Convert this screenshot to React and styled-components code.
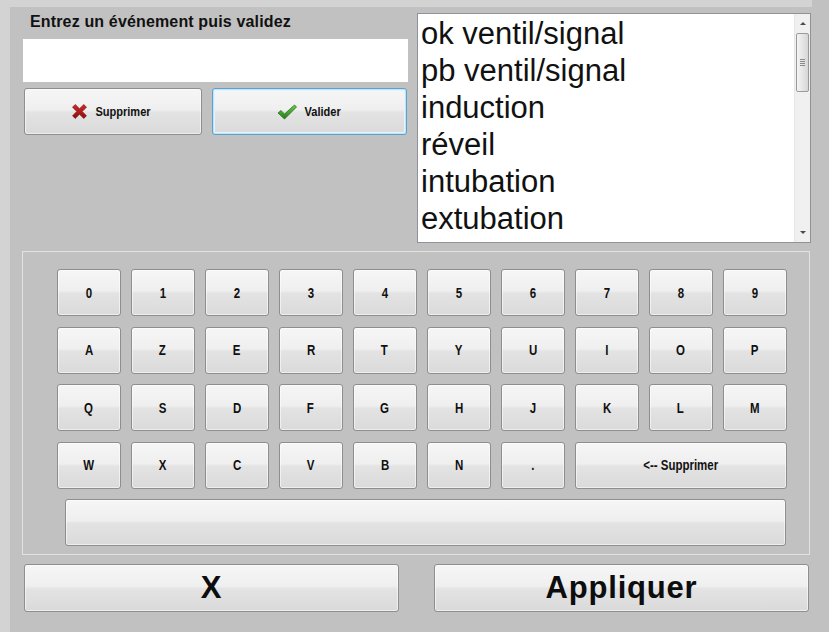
import React from "react";
import styled, { createGlobalStyle, css } from "styled-components";

const GlobalStyle = createGlobalStyle`
  html, body {
    margin: 0;
    padding: 0;
    background: #c1c1c1;
  }
  body {
    font-family: "Liberation Sans", Arial, sans-serif;
  }
  * {
    box-sizing: border-box;
  }
`;

const buttonFace = css`
  border: 1px solid #8e8e8e;
  border-radius: 3px;
  background: linear-gradient(
    to bottom,
    #f6f6f6 0%,
    #efefef 46%,
    #e3e3e3 52%,
    #dadada 100%
  );
  box-shadow: inset 0 0 0 1px rgba(255, 255, 255, 0.55);
  color: #111;
  padding: 0;
  cursor: pointer;
`;

const Frame = styled.div`
  width: 812px;
  height: 632px;
  border-left: 10px solid #d3d3d3;
  border-top: 7px solid #d3d3d3;
  background: #c1c1c1;
  padding: 6px 0 0 12px;
  display: flex;
  flex-direction: column;
`;

const TopRow = styled.div`
  display: flex;
  gap: 9px;
`;

const EntryColumn = styled.div`
  width: 386px;
  display: flex;
  flex-direction: column;
`;

const Prompt = styled.label`
  font-weight: bold;
  font-size: 16px;
  line-height: 18px;
  letter-spacing: 0.15px;
  color: #111;
  padding-left: 8px;
`;

const EventInput = styled.input`
  margin: 8px 0 0 1px;
  height: 43px;
  width: 385px;
  border: none;
  background: #fff;
  font: 18px "Liberation Sans", Arial, sans-serif;
  padding: 0 6px;
  outline: none;
`;

const ActionRow = styled.div`
  display: flex;
  gap: 10px;
  margin: 6px 0 0 2px;
`;

const ActionButton = styled.button`
  ${buttonFace};
  width: ${(p) => p.$width}px;
  height: 47px;
  display: flex;
  align-items: center;
  justify-content: center;
  gap: 6px;
  font: bold 12px "Liberation Sans", Arial, sans-serif;
  ${(p) =>
    p.$focused &&
    css`
      border-color: #5aa3d0;
      box-shadow: inset 0 0 0 1px #bfe4f8, inset 0 0 0 2px #e4f4fc;
    `}
`;

/* narrow bold face for the small captions */
const Narrow = styled.span`
  display: inline-block;
  transform: scaleX(${(p) => p.$scale || 0.82});
  white-space: nowrap;
`;

const EventList = styled.div`
  width: 394px;
  height: 230px;
  border: 1px solid #8f9399;
  background: #fff;
  display: flex;
`;

const Items = styled.ul`
  flex: 1;
  list-style: none;
  margin: 0;
  padding: 1px 0 0 3px;
  overflow: hidden;
`;

const Item = styled.li`
  font-size: 31px;
  line-height: 37px;
  color: #111;
  white-space: nowrap;
`;

const ScrollTrack = styled.div`
  width: 16px;
  background: #f0f0f0;
  border-left: 1px solid #e6e6e6;
  display: flex;
  flex-direction: column;
  align-items: center;
`;

const ArrowCell = styled.div`
  height: 19px;
  width: 100%;
  display: flex;
  align-items: center;
  justify-content: center;
  margin-top: ${(p) => (p.$down ? "auto" : "0")};
`;

const Arrow = styled.span`
  width: 0;
  height: 0;
  border-left: 3px solid transparent;
  border-right: 3px solid transparent;
  ${(p) =>
    p.$down
      ? css`
          border-top: 3px solid #4a4a4a;
        `
      : css`
          border-bottom: 3px solid #4a4a4a;
        `}
`;

const Thumb = styled.div`
  width: 13px;
  height: 59px;
  border: 1px solid #9a9a9a;
  border-radius: 2px;
  background: linear-gradient(to right, #f4f4f4, #e4e4e4 55%, #d6d6d6);
  display: flex;
  flex-direction: column;
  align-items: center;
  justify-content: center;
  gap: 1px;
`;

const Grip = styled.span`
  width: 5px;
  height: 1px;
  background: #8a8a8a;
`;

const KeyPanel = styled.div`
  width: 788px;
  height: 304px;
  margin-top: 8px;
  border: 1px solid #e2e2e2;
  padding: 17px 0 0 34px;
`;

const KeyGrid = styled.div`
  display: grid;
  grid-template-columns: repeat(10, 63.5px);
  grid-auto-rows: 47px;
  column-gap: 10.5px;
  row-gap: 10.5px;
`;

const Key = styled.button`
  ${buttonFace};
  grid-column: span ${(p) => p.$span || 1};
  font: bold 14px "Liberation Sans", Arial, sans-serif;
`;

const SpaceBar = styled.button`
  ${buttonFace};
  display: block;
  width: 721px;
  height: 47px;
  margin: 10.5px 0 0 8px;
`;

const BottomRow = styled.div`
  display: flex;
  gap: 35px;
  margin: 9px 0 0 2px;
`;

const BigButton = styled.button`
  ${buttonFace};
  width: 375px;
  height: 48px;
  font: bold 31px "Liberation Sans", Arial, sans-serif;
  letter-spacing: 0.8px;
  color: #0d0d0d;
`;

function CrossIcon() {
  return (
    <svg width="15" height="15" viewBox="0 0 14 14" aria-hidden="true">
      <defs>
        <linearGradient id="crossRed" x1="0" y1="0" x2="0" y2="1">
          <stop offset="0" stopColor="#d8282b" />
          <stop offset="1" stopColor="#8e0d10" />
        </linearGradient>
      </defs>
      <path
        d="M0.5 3 L3 0.5 L7 4.5 L11 0.5 L13.5 3 L9.5 7 L13.5 11 L11 13.5 L7 9.5 L3 13.5 L0.5 11 L4.5 7 Z"
        fill="url(#crossRed)"
        stroke="#6e0a0c"
        strokeWidth="0.6"
        strokeLinejoin="round"
      />
    </svg>
  );
}

function CheckIcon() {
  return (
    <svg width="20" height="16" viewBox="0 0 20 16" aria-hidden="true">
      <defs>
        <linearGradient id="checkGreen" x1="0" y1="0" x2="0" y2="1">
          <stop offset="0" stopColor="#6fd24a" />
          <stop offset="1" stopColor="#1f7a17" />
        </linearGradient>
      </defs>
      <path
        d="M1 9 L4 6.5 L7.5 10 L17.5 1 L19.5 3 L7.5 15 Z"
        fill="url(#checkGreen)"
        stroke="#1b5e14"
        strokeWidth="0.7"
        strokeLinejoin="round"
      />
    </svg>
  );
}

const events = [
  "ok ventil/signal",
  "pb ventil/signal",
  "induction",
  "réveil",
  "intubation",
  "extubation",
];

const keyRows = [
  ["0", "1", "2", "3", "4", "5", "6", "7", "8", "9"],
  ["A", "Z", "E", "R", "T", "Y", "U", "I", "O", "P"],
  ["Q", "S", "D", "F", "G", "H", "J", "K", "L", "M"],
  ["W", "X", "C", "V", "B", "N", "."],
];

export default function App() {
  return (
    <>
      <GlobalStyle />
      <Frame>
        <TopRow>
          <EntryColumn>
            <Prompt htmlFor="event">Entrez un événement puis validez</Prompt>
            <EventInput id="event" />
            <ActionRow>
              <ActionButton $width={178}>
                <CrossIcon />
                <Narrow $scale={0.92}>Supprimer</Narrow>
              </ActionButton>
              <ActionButton $width={195} $focused>
                <CheckIcon />
                <Narrow $scale={0.92}>Valider</Narrow>
              </ActionButton>
            </ActionRow>
          </EntryColumn>
          <EventList>
            <Items>
              {events.map((e) => (
                <Item key={e}>{e}</Item>
              ))}
            </Items>
            <ScrollTrack>
              <ArrowCell>
                <Arrow />
              </ArrowCell>
              <Thumb>
                <Grip />
                <Grip />
                <Grip />
                <Grip />
              </Thumb>
              <ArrowCell $down>
                <Arrow $down />
              </ArrowCell>
            </ScrollTrack>
          </EventList>
        </TopRow>

        <KeyPanel>
          <KeyGrid>
            {keyRows.flat().map((k, i) => (
              <Key key={i}>
                <Narrow>{k}</Narrow>
              </Key>
            ))}
            <Key $span={3}>
              <Narrow>&lt;-- Supprimer</Narrow>
            </Key>
          </KeyGrid>
          <SpaceBar />
        </KeyPanel>

        <BottomRow>
          <BigButton>X</BigButton>
          <BigButton>Appliquer</BigButton>
        </BottomRow>
      </Frame>
    </>
  );
}
